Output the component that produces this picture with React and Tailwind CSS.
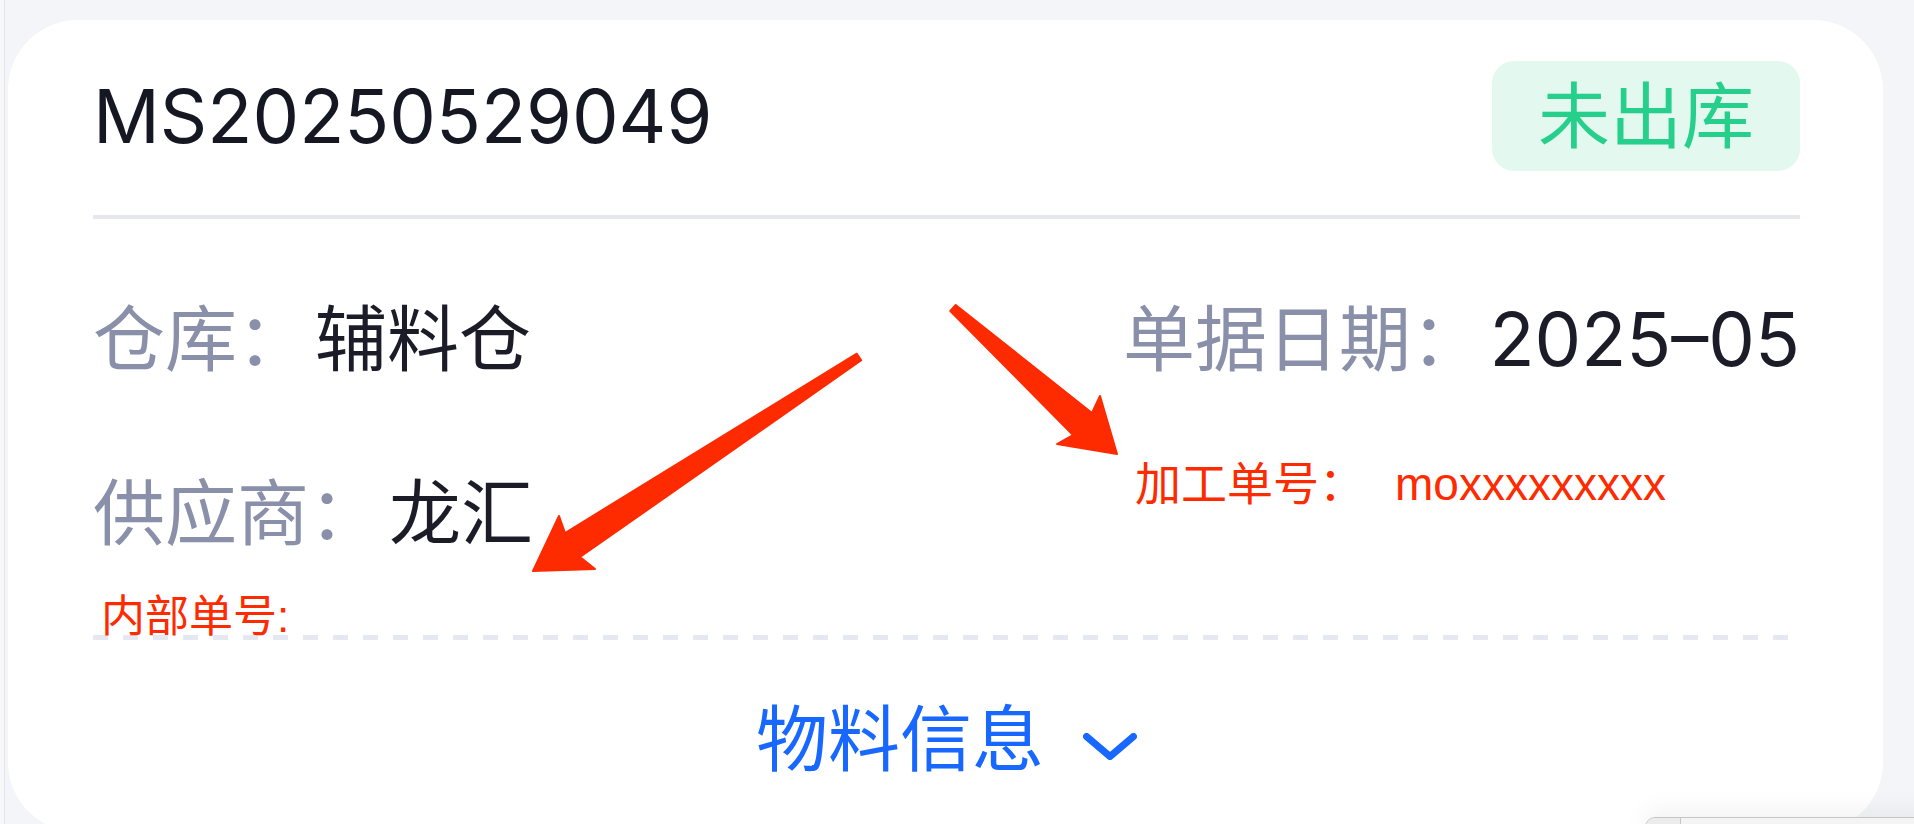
import React from "react";

const sans = "font-['Inter','Noto_Sans_CJK_SC',sans-serif]";
const note = "font-['Liberation_Sans','Noto_Sans_CJK_SC',sans-serif]";

// red annotation arrows drawn over the screenshot
const arrows = [
  "856.8,353.7 565,533 559,516 533,571 595,569 580,557 861.2,360.3",
  "955.7,305 1092,413 1100,396 1117,454 1057,444 1073,435 950.3,311",
];

const InfoRow = ({ label, value, gap = "ml-[8px]" }) => (
  <div className="h-[90px] flex items-center">
    <span className="text-[72px] leading-none text-[#8a90aa]">{label}</span>
    <span className={`text-[72px] leading-none text-[#1b1c27] ${gap}`}>{value}</span>
  </div>
);

const App = () => {
  return (
    <div className={`relative w-[1914px] h-[824px] overflow-hidden bg-[#f4f5f9] ${sans}`}>
      <div className="flex h-full">
        <div className="w-[4px] bg-[#f8f8fa]" />
        <div className="w-px bg-[#e3e4e9]" />
        <div className="pl-[3px] pt-[20px]">
          <div className="w-[1875px] h-[812px] rounded-[70px] bg-white pl-[85px] pr-[83px] pt-[41px]">
            <div className="h-[110px] flex items-center justify-between">
              <h2 className="text-[74px] leading-none font-normal text-[#151823]">MS20250529049</h2>
              <div className="h-[110px] px-[46px] rounded-[22px] bg-[#e3f8ef] flex items-center">
                <span className="text-[72px] leading-none text-[#27cf8d]">未出库</span>
              </div>
            </div>

            <div className="mt-[44px] h-[4px] bg-[#e6e8f0]" />

            <div className="flex h-[416px]">
              <div className="flex-1">
                <div className="mt-[75px]">
                  <InfoRow label="仓库：" value="辅料仓" gap="ml-[6px]" />
                </div>
                <div className="mt-[84px]">
                  <InfoRow label="供应商：" value="龙汇" />
                </div>
                <div className={`mt-[34px] h-[50px] pl-[8px] flex items-center text-[44px] leading-none text-[#fe2a00] ${note}`}>
                  内部单号:
                </div>
              </div>
              <div className="w-[677px]">
                <div className="mt-[75px] h-[90px] flex items-center justify-between">
                  <span className="text-[72px] leading-none text-[#8a90aa]">单据日期：</span>
                  <span className="text-[74px] leading-none text-[#1b1c27]">2025–05</span>
                </div>
                <div className={`mt-[75px] h-[50px] pl-[12px] flex items-center text-[46px] leading-none text-[#fe2a00] ${note}`}>
                  <span>加工单号：</span>
                  <span className="ml-[30px]">moxxxxxxxxx</span>
                </div>
              </div>
            </div>

            <div className="h-[5px] bg-[repeating-linear-gradient(90deg,#e5e7f1_0px,#e5e7f1_15px,transparent_15px,transparent_30px)]" />

            <div className="mt-[54px] h-[90px] flex items-center justify-center">
              <span className="text-[72px] leading-none text-[#1868ff]">物料信息</span>
              <svg width="54" height="27" viewBox="0 0 54 27" className="ml-[39px] mt-[14px]">
                <polyline
                  points="3.5,3.5 27,23.5 50.5,3.5"
                  fill="none"
                  stroke="#1868ff"
                  strokeWidth="7"
                  strokeLinecap="round"
                  strokeLinejoin="round"
                />
              </svg>
            </div>
          </div>
        </div>
      </div>

      <svg
        className="absolute inset-0 pointer-events-none"
        width="1914"
        height="824"
        viewBox="0 0 1914 824"
      >
        {arrows.map((pts, i) => (
          <polygon key={i} points={pts} fill="#fe2a00" stroke="#fe2a00" strokeWidth="2" strokeLinejoin="round" />
        ))}
      </svg>

      <div className="absolute left-[1645px] top-[817px] w-[290px] h-[30px] rounded-tl-[10px] border border-[#c5c5c5] bg-[#f4f4f4] shadow-[0_-8px_24px_rgba(0,0,0,0.05)] flex overflow-hidden">
        <div className="w-[35px] bg-[#ececec] border-r border-[#c5c5c5]" />
      </div>
    </div>
  );
};

export default App;
